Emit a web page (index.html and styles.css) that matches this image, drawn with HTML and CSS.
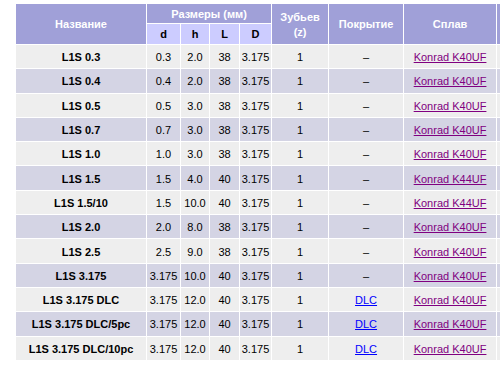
FILE: index.html
```html
<!DOCTYPE html>
<html lang="ru">
<head>
<meta charset="utf-8">
<title>L1S</title>
<link rel="stylesheet" href="styles.css">
</head>
<body>
<table class="spec">
  <colgroup>
    <col class="c-name"><col class="c-d"><col class="c-h"><col class="c-l"><col class="c-dd"><col class="c-z"><col class="c-p"><col class="c-s"><col class="c-x">
  </colgroup>
  <thead>
    <tr class="h1">
      <th rowspan="2">Название</th>
      <th colspan="4">Размеры (мм)</th>
      <th rowspan="2">Зубьев<br>(z)</th>
      <th rowspan="2">Покрытие</th>
      <th rowspan="2">Сплав</th>
      <th rowspan="2"></th>
    </tr>
    <tr class="h2">
      <th class="sub">d</th><th class="sub">h</th><th class="sub">L</th><th class="sub">D</th>
    </tr>
  </thead>
  <tbody>
    <tr class="odd"><td class="name">L1S 0.3</td><td>0.3</td><td>2.0</td><td>38</td><td>3.175</td><td>1</td><td>–</td><td><a class="alloy" href="#">Konrad K40UF</a></td><td></td></tr>
    <tr class="even"><td class="name">L1S 0.4</td><td>0.4</td><td>2.0</td><td>38</td><td>3.175</td><td>1</td><td>–</td><td><a class="alloy" href="#">Konrad K40UF</a></td><td></td></tr>
    <tr class="odd"><td class="name">L1S 0.5</td><td>0.5</td><td>3.0</td><td>38</td><td>3.175</td><td>1</td><td>–</td><td><a class="alloy" href="#">Konrad K40UF</a></td><td></td></tr>
    <tr class="even"><td class="name">L1S 0.7</td><td>0.7</td><td>3.0</td><td>38</td><td>3.175</td><td>1</td><td>–</td><td><a class="alloy" href="#">Konrad K40UF</a></td><td></td></tr>
    <tr class="odd"><td class="name">L1S 1.0</td><td>1.0</td><td>3.0</td><td>38</td><td>3.175</td><td>1</td><td>–</td><td><a class="alloy" href="#">Konrad K40UF</a></td><td></td></tr>
    <tr class="even"><td class="name">L1S 1.5</td><td>1.5</td><td>4.0</td><td>40</td><td>3.175</td><td>1</td><td>–</td><td><a class="alloy" href="#">Konrad K44UF</a></td><td></td></tr>
    <tr class="odd"><td class="name">L1S 1.5/10</td><td>1.5</td><td>10.0</td><td>40</td><td>3.175</td><td>1</td><td>–</td><td><a class="alloy" href="#">Konrad K44UF</a></td><td></td></tr>
    <tr class="even"><td class="name">L1S 2.0</td><td>2.0</td><td>8.0</td><td>38</td><td>3.175</td><td>1</td><td>–</td><td><a class="alloy" href="#">Konrad K40UF</a></td><td></td></tr>
    <tr class="odd"><td class="name">L1S 2.5</td><td>2.5</td><td>9.0</td><td>38</td><td>3.175</td><td>1</td><td>–</td><td><a class="alloy" href="#">Konrad K40UF</a></td><td></td></tr>
    <tr class="even"><td class="name">L1S 3.175</td><td>3.175</td><td>10.0</td><td>40</td><td>3.175</td><td>1</td><td>–</td><td><a class="alloy" href="#">Konrad K40UF</a></td><td></td></tr>
    <tr class="odd"><td class="name">L1S 3.175 DLC</td><td>3.175</td><td>12.0</td><td>40</td><td>3.175</td><td>1</td><td><a class="coat" href="#">DLC</a></td><td><a class="alloy" href="#">Konrad K40UF</a></td><td></td></tr>
    <tr class="even"><td class="name">L1S 3.175 DLC/5pc</td><td>3.175</td><td>12.0</td><td>40</td><td>3.175</td><td>1</td><td><a class="coat" href="#">DLC</a></td><td><a class="alloy" href="#">Konrad K40UF</a></td><td></td></tr>
    <tr class="odd"><td class="name">L1S 3.175 DLC/10pc</td><td>3.175</td><td>12.0</td><td>40</td><td>3.175</td><td>1</td><td><a class="coat" href="#">DLC</a></td><td><a class="alloy" href="#">Konrad K40UF</a></td><td></td></tr>
  </tbody>
</table>
</body>
</html>
```

FILE: styles.css
```css
html, body {
  margin: 0;
  padding: 0;
  background: #ffffff;
  overflow: hidden;
}
body {
  padding: 3px 0 0 15px;
  font-family: "Liberation Sans", Arial, sans-serif;
  font-size: 11px;
  color: #000000;
}
.spec {
  table-layout: fixed;
  border-collapse: separate;
  border-spacing: 1px;
  background: #ffffff;
  width: 486px;
}
.c-name { width: 130px; }
.c-d { width: 33px; }
.c-h { width: 28px; }
.c-l { width: 29px; }
.c-dd { width: 31px; }
.c-z { width: 56px; }
.c-p { width: 74px; }
.c-s { width: 92px; }
.c-x { width: 3px; }
.spec th, .spec td {
  padding: 0;
  text-align: center;
  vertical-align: middle;
  white-space: nowrap;
  overflow: hidden;
}
.spec th {
  background: #a0a0d8;
  color: #ffffff;
  font-weight: bold;
  line-height: 15px;
}
.h1 th { height: 18px; padding-top: 1px; }
.h2 th { height: 20px; }
.spec th.sub {
  background: #ccccff;
  color: #000000;
}
.spec td { height: 22.3px; padding-top: 1px; }
.odd td { background: #eeeeee; }
.even td { background: #d4d4e4; }
.spec td.name { font-weight: bold; }
.alloy { color: #800080; text-decoration: underline; }
.coat { color: #0000ff; text-decoration: underline; }
```
